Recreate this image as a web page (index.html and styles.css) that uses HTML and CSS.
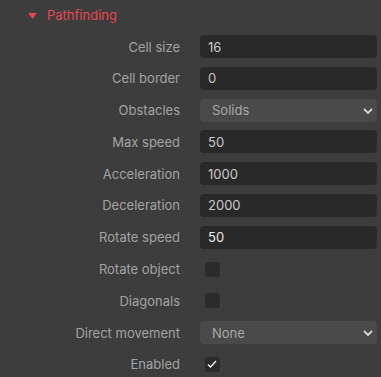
FILE: index.html
```html
<!DOCTYPE html>
<html lang="en">

<head>
    <meta charset="UTF-8">
    <title>Pathfinding</title>
    <link rel="stylesheet" href="styles.css">
</head>

<body>

    <!-- Section header -->
    <div class="section-header">
        <svg class="caret" width="9" height="6" viewBox="0 0 9 6"><polygon points="0,0 9,0 4.5,6" fill="#e5484d"/></svg>
        <span>Pathfinding</span>
    </div>

    <!-- Properties -->
    <div class="props">
        <label class="prop-label">Cell size</label>
        <input class="prop-input" type="text" value="16">

        <label class="prop-label">Cell border</label>
        <input class="prop-input" type="text" value="0">

        <label class="prop-label">Obstacles</label>
        <div class="select-wrap">
            <select class="prop-select"><option>Solids</option></select>
            <svg class="chevron" width="10" height="6" viewBox="0 0 10 6"><polyline points="1,1 5,5 9,1" fill="none" stroke="#d6d6d6" stroke-width="1.8"/></svg>
        </div>

        <label class="prop-label">Max speed</label>
        <input class="prop-input" type="text" value="50">

        <label class="prop-label">Acceleration</label>
        <input class="prop-input" type="text" value="1000">

        <label class="prop-label">Deceleration</label>
        <input class="prop-input" type="text" value="2000">

        <label class="prop-label">Rotate speed</label>
        <input class="prop-input bright" type="text" value="50">

        <label class="prop-label">Rotate object</label>
        <div class="check-cell"><span class="check"></span></div>

        <label class="prop-label">Diagonals</label>
        <div class="check-cell"><span class="check"></span></div>

        <label class="prop-label">Direct movement</label>
        <div class="select-wrap">
            <select class="prop-select"><option>None</option></select>
            <svg class="chevron" width="10" height="6" viewBox="0 0 10 6"><polyline points="1,1 5,5 9,1" fill="none" stroke="#d6d6d6" stroke-width="1.8"/></svg>
        </div>

        <label class="prop-label">Enabled</label>
        <div class="check-cell">
            <span class="check">
                <svg width="15" height="15" viewBox="0 0 15 15"><polyline points="3,7.5 5.5,10 11,4" fill="none" stroke="#f0f0f0" stroke-width="1.4"/></svg>
            </span>
        </div>
    </div>

</body>

</html>
```

FILE: styles.css
```css
/* Base */
body {
    font-family: Inter, "Noto Sans", sans-serif;
    font-size: 13px;
    background-color: #3d3d3d;
    color: #a3a3a3;
    margin: 0;
    padding: 0;
}

/* Section header */
.section-header {
    display: flex;
    align-items: center;
    gap: 10px;
    height: 30px;
    padding-left: 28px;
    color: #e5484d;
}

.caret {
    margin-top: 1px;
}

/* Property grid */
.props {
    display: grid;
    grid-template-columns: 180px 177px;
    grid-auto-rows: 23px;
    column-gap: 20px;
    row-gap: 8.8px;
    padding-top: 5px;
}

.prop-label {
    display: flex;
    align-items: center;
    justify-content: flex-end;
    white-space: nowrap;
}

.prop-input {
    font-family: inherit;
    font-size: 13px;
    color: #c9c9c9;
    background-color: #292929;
    border: none;
    border-radius: 4px;
    padding: 0 8px;
    margin: 0;
    height: 23px;
    width: 100%;
    box-sizing: border-box;
    outline: none;
}

.prop-input.bright {
    color: #ececec;
}

.select-wrap {
    position: relative;
}

.prop-select {
    appearance: none;
    -webkit-appearance: none;
    font-family: inherit;
    font-size: 13px;
    color: #a8a8a8;
    background-color: #4a4a4a;
    border: none;
    border-radius: 4px;
    padding: 0 12px;
    margin: 0;
    height: 23px;
    width: 100%;
    box-sizing: border-box;
    outline: none;
}

.chevron {
    position: absolute;
    right: 4px;
    top: 9px;
    pointer-events: none;
}

.check-cell {
    display: flex;
    align-items: center;
    padding-left: 5px;
}

.check {
    display: block;
    width: 15px;
    height: 15px;
    border-radius: 3px;
    background-color: #2b2b2b;
    box-sizing: border-box;
}

.check svg {
    display: block;
}
```
